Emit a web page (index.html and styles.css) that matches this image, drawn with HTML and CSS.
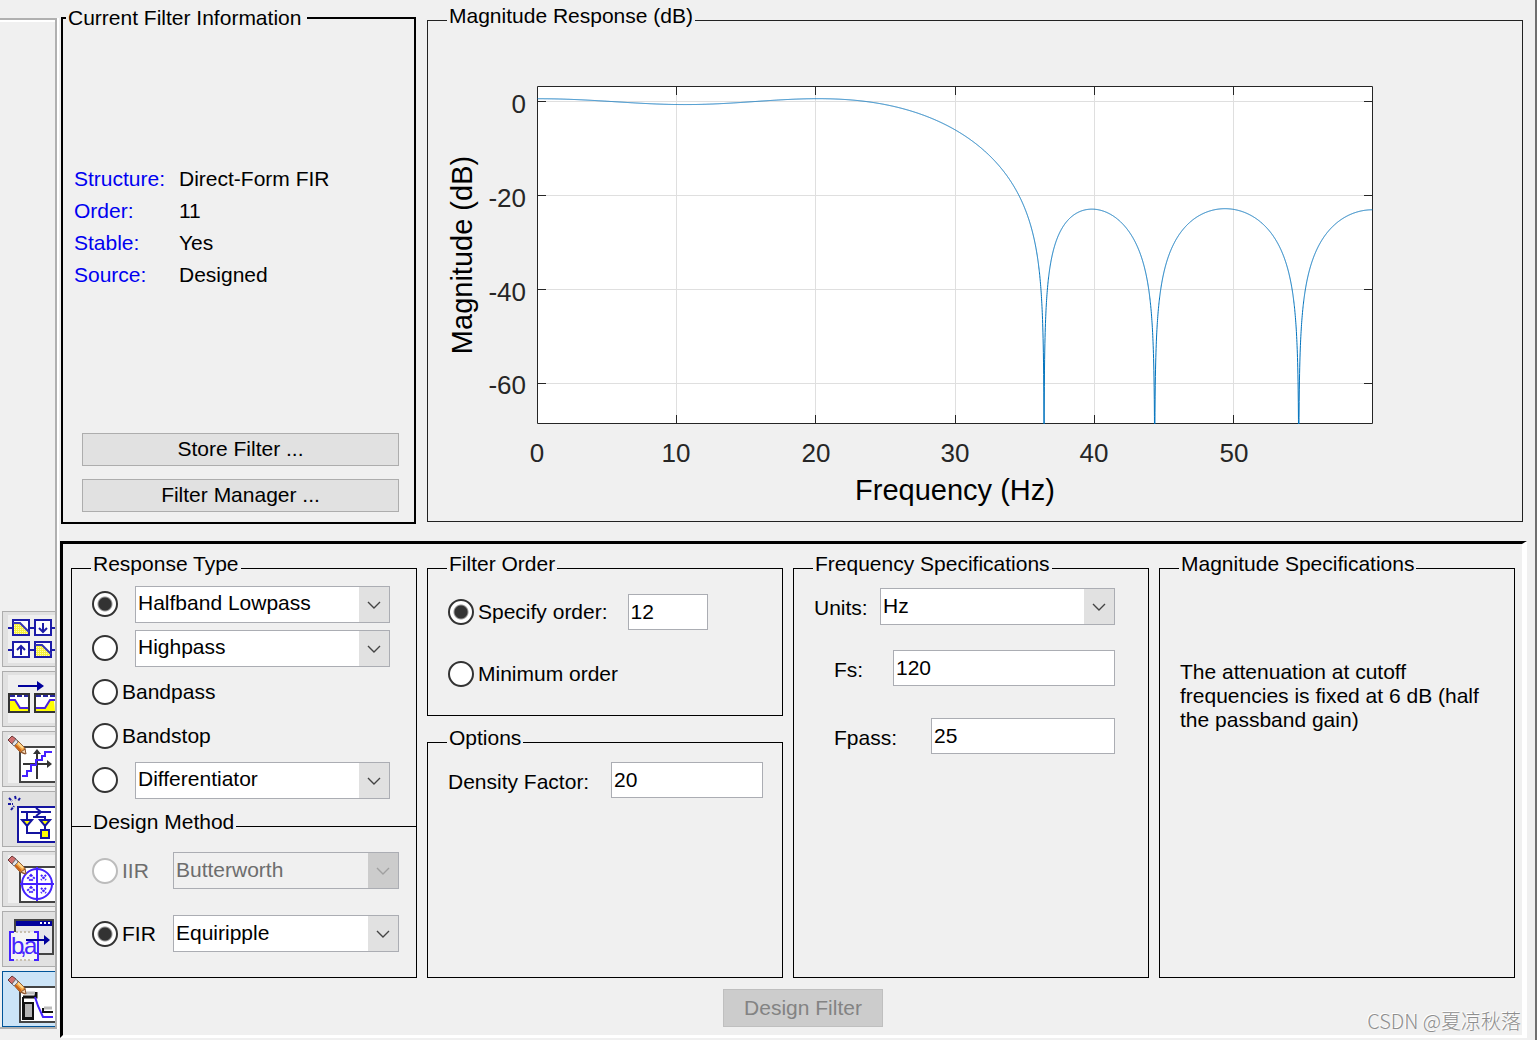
FILE: index.html
```html
<!DOCTYPE html>
<html lang="en">
<head>
<meta charset="utf-8">
<title>Filter Designer</title>
<link rel="stylesheet" href="styles.css">
</head>
<body>
<svg class="defs" aria-hidden="true">
  <defs>
    <pattern id="dots" width="2" height="2" patternUnits="userSpaceOnUse">
      <rect width="2" height="2" fill="#f4f03c"/><rect width="1" height="1" fill="#fffbb0"/>
    </pattern>
    <g id="pencil" stroke-width="1">
      <path d="M4 8 L8 4 L17 13 L17 19 L12 17 Z" fill="#f0a040" stroke="#8a5430"/>
      <path d="M7 10 L13 16" stroke="#c86418" stroke-width="2"/>
      <path d="M10 8 L15 13" stroke="#ffd890" stroke-width="2"/>
      <path d="M0 5 L4 1 L8 4 L4 9 Z" fill="#d07070" stroke="#6a3838"/>
      <path d="M4 9 L8 4 L10 7 L6 11 Z" fill="#e4e4e8" stroke="#77777c"/>
      <path d="M13 17 L18 19 L17 14 Z" fill="#f8d8b0" stroke="#8a5430"/>
    </g>
    <g id="sheet">
      <rect x="12" y="12" width="40" height="35" fill="#fff" stroke="#444" stroke-width="2"/>
    </g>
  </defs>
</svg>

<nav class="toolbar" aria-label="Design panels">
  <button type="button" class="tool" aria-label="Create a multirate filter">
    <svg viewBox="0 0 47 48" fill="none" stroke="#1c1ca8" stroke-width="2">
      <rect width="47" height="48" fill="#efefef" stroke="none"/>
      <path d="M0 13 H47 M0 35 H47"/>
      <path d="M5 5 H21 V20 H5 Z M27 5 H43 V20 H27 Z M5 27 H21 V42 H5 Z M27 27 H43 V42 H27 Z" fill="#fdfdfd"/>
      <path d="M6 7 H12 L20 17 V19 H6 Z M28 29 H34 L42 39 V41 H28 Z" fill="url(#dots)" stroke="none"/>
      <path d="M5 8 H12 L21 17 M27 30 H34 L43 39" stroke="#3434b8"/>
      <path d="M35 8 V17 M31 13 L35 17 L39 13 M13 40 V31 M9 35 L13 31 L17 35"/>
    </svg>
  </button>
  <button type="button" class="tool" aria-label="Transform filter">
    <svg viewBox="0 0 47 48" fill="none" stroke-width="2">
      <rect width="47" height="48" fill="#efefef"/>
      <path d="M10 11 H31" stroke="#00009c"/><path d="M29 6 L36 11 L29 16 Z" fill="#00009c"/>
      <path d="M1 19 H21 V37 H1 Z M27 19 H50 V37 H27 Z" fill="#fff" stroke="#333"/>
      <path d="M2 25 H7 L12 34 H20 V36 H2 Z M46 25 H42 L37 34 H28 V36 H47 Z" fill="#ffff00"/>
      <path d="M2 25 H7 L12 33 H20 M47 25 H42 L37 33 H28" stroke="#4a22e0"/>
      <path d="M2 21 H20 M28 21 H47" stroke="#2626a0" stroke-dasharray="5 2"/>
    </svg>
  </button>
  <button type="button" class="tool" aria-label="Set quantization parameters">
    <svg viewBox="0 0 47 48" fill="none" stroke-width="2">
      <rect width="47" height="48" fill="#efefef"/>
      <use href="#sheet"/>
      <path d="M29 44 V18 M15 29 H41" stroke="#333"/>
      <path d="M25 19 L29 14 L33 19 Z M39 25 L44 29 L39 33 Z" fill="#333"/>
      <path d="M14 41 H19 V36 H23 V30 H28 V25 H34 V21 H37 V17 H44" stroke="#4422ff"/>
      <use href="#pencil"/>
    </svg>
  </button>
  <button type="button" class="tool" aria-label="Realize model">
    <svg viewBox="0 0 47 48" fill="none" stroke="#1414a0" stroke-width="2">
      <path d="M1 3 L4 6 M7 1 L8 5 M12 3 L10 6 M0 9 H5 M3 15 L6 11" stroke-dasharray="3 1"/>
      <rect x="10" y="12" width="42" height="35" fill="#fff"/>
      <path d="M13 17 H43 M19 17 V38 H33 M25 22 H37 V38 M28 13 L33 17 L28 21"/>
      <path d="M14 25 H24 L19 31 Z M32 25 H42 L37 31 Z" fill="#ffff00"/>
      <path d="M33 35 H41 V43 H33 Z" fill="#ffff00"/>
    </svg>
  </button>
  <button type="button" class="tool" aria-label="Pole/zero editor">
    <svg viewBox="0 0 47 48" fill="none" stroke-width="2">
      <rect width="47" height="48" fill="#efefef"/>
      <use href="#sheet"/>
      <g stroke="#4422ff"><circle cx="29" cy="29" r="15"/>
      <path d="M29 12 V46 M12 29 H46"/>
      <path d="M33 20 L38 25 M38 20 L33 25 M33 33 L38 38 M38 33 L33 38 M23 20 L26 23 L23 26 L20 23 Z M23 32 L26 35 L23 38 L20 35 Z" stroke-dasharray="2 1"/></g>
      <use href="#pencil"/>
    </svg>
  </button>
  <button type="button" class="tool" aria-label="Import filter">
    <svg viewBox="0 0 47 48" fill="none" stroke-width="2">
      <rect x="7" y="5" width="38" height="34" fill="#e6e6ea" stroke="#444"/>
      <rect x="8" y="6" width="36" height="5" fill="#00009c"/>
      <path d="M32 8 H43" stroke="#fff" stroke-dasharray="2 2"/>
      <path d="M2 17 H30 V45 H2 Z" fill="#f4f4f4"/>
      <path d="M6 17 H2 V45 H6 M26 17 H30 V45 H26" stroke="#4422ff"/>
      <path d="M8 17 H24 M8 45 H24" stroke="#c8c0b0" stroke-dasharray="2 2"/>
      <text class="coef" x="3 12 16" y="39">b,a</text>
      <path d="M18 25 H37" stroke="#00009c"/><path d="M36 20 L42 25 L36 30 Z" fill="#00009c"/>
    </svg>
  </button>
  <button type="button" class="tool tool-active" aria-label="Design filter" aria-pressed="true">
    <svg viewBox="0 0 47 48" fill="none" stroke-width="2">
      <use href="#sheet"/>
      <path d="M16 28 H25 V43 H16 Z" fill="#b4b4b4" stroke="#111"/>
      <path d="M15 22 H28 V17" stroke="#111" stroke-width="3"/>
      <path d="M18 18 H27 M36 33 H44" stroke="#bbb" stroke-width="3"/>
      <path d="M15 22 V44 M35 33 V37 H45" stroke="#111"/>
      <path d="M14 44 H26" stroke="#111"/>
      <path d="M27 22 L30 31 L35 42 H45" stroke="#4422ff"/>
      <use href="#pencil"/>
    </svg>
  </button>
</nav>

<main class="main">
  <div class="top">
    <fieldset class="info">
      <legend>Current Filter Information</legend>
      <dl class="facts">
        <dt>Structure:</dt><dd>Direct-Form FIR</dd>
        <dt>Order:</dt><dd>11</dd>
        <dt>Stable:</dt><dd>Yes</dd>
        <dt>Source:</dt><dd>Designed</dd>
      </dl>
      <div class="info-actions">
        <button type="button" class="btn">Store Filter ...</button>
        <button type="button" class="btn">Filter Manager ...</button>
      </div>
    </fieldset>

    <fieldset class="group response">
      <legend>Magnitude Response (dB)</legend>
      <svg class="plot" viewBox="0 0 1094 489" role="img" aria-label="Magnitude response in dB against frequency in Hz">
        <defs><clipPath id="area"><rect width="836" height="338"/></clipPath></defs>
        <g transform="translate(109 54)">
          <rect width="836" height="338" fill="#fff"/>
          <path class="grid" d="M139.5 0 V337 M278.5 0 V337 M418.5 0 V337 M557.5 0 V337 M696.5 0 V337 M0 15.5 H835 M0 109.5 H835 M0 203.5 H835 M0 297.5 H835"/>
          <path class="axis" d="M0.5 0.5 H835.5 V337.5 H0.5 Z M139.5 0 V9 M278.5 0 V9 M418.5 0 V9 M557.5 0 V9 M696.5 0 V9 M139.5 337 V329 M278.5 337 V329 M418.5 337 V329 M557.5 337 V329 M696.5 337 V329 M0 15.5 H9 M0 109.5 H9 M0 203.5 H9 M0 297.5 H9 M835 15.5 H827 M835 109.5 H827 M835 203.5 H827 M835 297.5 H827"/>
          <path class="curve" id="curve" clip-path="url(#area)"/>
          <g class="tick x">
            <text x="0" y="376">0</text><text x="139" y="376">10</text><text x="279" y="376">20</text>
            <text x="418" y="376">30</text><text x="557" y="376">40</text><text x="697" y="376">50</text>
          </g>
          <g class="tick y">
            <text x="-11" y="27">0</text><text x="-11" y="121">-20</text><text x="-11" y="215">-40</text><text x="-11" y="308">-60</text>
          </g>
          <text class="axis-name" x="418" y="414">Frequency (Hz)</text>
          <text class="axis-name" transform="translate(-65 169) rotate(-90)">Magnitude (dB)</text>
        </g>
      </svg>
    </fieldset>
  </div>

  <form class="design">
    <div class="columns">
      <div class="column">
        <fieldset class="group type">
          <legend>Response Type</legend>
          <div class="row"><input type="radio" name="type" checked aria-label="Lowpass type"><select class="kind" aria-label="Lowpass type list"><option>Halfband Lowpass</option></select></div>
          <div class="row"><input type="radio" name="type" aria-label="Highpass type"><select class="kind" aria-label="Highpass type list"><option>Highpass</option></select></div>
          <div class="row"><input type="radio" name="type" id="bp"><label for="bp">Bandpass</label></div>
          <div class="row"><input type="radio" name="type" id="bs"><label for="bs">Bandstop</label></div>
          <div class="row"><input type="radio" name="type" aria-label="Other type"><select class="kind" aria-label="Other type list"><option>Differentiator</option></select></div>
        </fieldset>
        <fieldset class="group method">
          <legend>Design Method</legend>
          <div class="row"><input type="radio" name="method" id="iir" disabled><label for="iir" class="short off">IIR</label><select aria-label="IIR method" disabled><option>Butterworth</option></select></div>
          <div class="row"><input type="radio" name="method" id="fir" checked><label for="fir" class="short">FIR</label><select aria-label="FIR method"><option>Equiripple</option></select></div>
        </fieldset>
      </div>

      <div class="column stacked">
        <fieldset class="group order">
          <legend>Filter Order</legend>
          <div class="row"><input type="radio" name="order" id="spec" checked><label for="spec">Specify order:</label><input type="text" class="field order-field" value="12" aria-label="Order"></div>
          <div class="row"><input type="radio" name="order" id="min"><label for="min">Minimum order</label></div>
        </fieldset>
        <fieldset class="group options">
          <legend>Options</legend>
          <div class="row"><label for="density">Density Factor:</label><input type="text" class="field density-field" id="density" value="20"></div>
        </fieldset>
      </div>

      <fieldset class="group freq">
        <legend>Frequency Specifications</legend>
        <div class="row"><label for="units">Units:</label><select id="units" class="units"><option>Hz</option></select></div>
        <div class="row nested"><label for="fs">Fs:</label><input type="text" class="field fs" id="fs" value="120"></div>
        <div class="row nested last"><label for="fpass">Fpass:</label><input type="text" class="field fpass" id="fpass" value="25"></div>
      </fieldset>

      <fieldset class="group mag">
        <legend>Magnitude Specifications</legend>
        <p class="note">The attenuation at cutoff frequencies is fixed at 6 dB (half the passband gain)</p>
      </fieldset>
    </div>
    <div class="actions"><button type="button" class="btn design-btn" disabled>Design Filter</button></div>
  </form>
  <div class="watermark">CSDN @夏凉秋落</div>
</main>
<script src="plot.js"></script>
</body>
</html>
```
FILE: styles.css
```css
* { box-sizing: border-box; }

body {
  margin: 0;
  min-height: 100vh;
  display: grid;
  grid-template-columns: 60px 1fr;
  background: #f0f0f0;
  border-right: 2px solid #707070;
  color: #000;
  font: 21px/24px "Liberation Sans", Arial, "Noto Sans CJK SC", sans-serif;
}

button, input, select { font: inherit; color: inherit; margin: 0; }
.defs { position: absolute; width: 0; height: 0; }

/* Side toolbar */
.toolbar {
  display: flex;
  flex-direction: column;
  justify-content: flex-end;
  gap: 4px;
  width: 57px;
  margin: 18px 0 11px;
  padding-left: 2px;
  border: 2px solid #b0b0b0;
  border-left: 0;
  box-shadow: inset 0 2px #fff, 2px 0 #fff;
}
.tool {
  height: 56px;
  padding: 0 0 0 5px;
  background: #e1e1e1;
  border: 1px solid #adadad;
  border-right: 0;
  overflow: hidden;
  display: flex;
  align-items: center;
}
.tool svg { width: 47px; height: 48px; flex: none; }
.tool-active { background: #cce4f7; border-color: #005499; }
.coef { font: 24px "Liberation Sans", Arial, sans-serif; fill: #4422ff; stroke: none; }

/* Layout */
.main { position: relative; display: flex; flex-direction: column; padding: 6px 8px 2px 0; min-width: 0; }
.top { display: grid; grid-template-columns: 355px 1fr; gap: 11px; padding: 0 4px 0 1px; }

fieldset { margin: 0; padding: 0; border: 1px solid #000; min-width: 0; }
legend { padding: 0 2px; }
.group > legend { margin-left: -1px; line-height: 16px; padding-bottom: 8px; }

/* Current filter information */
.info {
  border: 2px solid #000;
  display: flex;
  flex-direction: column;
  justify-content: space-between;
  padding: 133px 15px 10px 11px;
}
.info legend { margin-left: -8px; padding: 0 6px 0 2px; }
.facts { display: grid; grid-template-columns: 105px 1fr; line-height: 32px; margin: 0; }
.facts dt { color: #0000f0; }
.facts dd { margin: 0; }
.info-actions { display: grid; gap: 13px; padding-left: 8px; }

.btn { height: 33px; padding: 0 0 2px; background: #e1e1e1; border: 1px solid #adadad; }

/* Plot */
.response { margin: 2px 0; border-color: #222; }
.response > legend { margin-left: 19px; }
.plot { display: block; width: 100%; height: auto; font-family: "Liberation Sans", Arial, sans-serif; }
.grid { stroke: #dfdfdf; fill: none; }
.axis { stroke: #262626; fill: none; }
.curve { stroke: #0072bd; fill: none; }
.tick { font-size: 26px; fill: #262626; }
.x { text-anchor: middle; }
.y { text-anchor: end; }
.axis-name { font-size: 29px; text-anchor: middle; }

/* Design panel */
.design {
  margin-top: 17px;
  padding: 12px 7px 8px 8px;
  border: 3px solid #000;
  border-right: 5px solid #fff;
  border-bottom-color: #fff;
}
.columns { display: grid; grid-template-columns: 346fr 356fr 356fr 356fr; gap: 10px; }
.column { display: flex; flex-direction: column; }
.stacked { gap: 14px; }
.row { display: flex; align-items: center; }

.type { padding: 2px 20px 24px; border-bottom: 0; }
.type .row { height: 44px; }
.kind { width: 255px; margin-left: 17px; }
.method { margin-top: -12px; padding: 14px 17px 25px 20px; display: grid; gap: 26px; }
.method select { flex: 1; min-width: 0; }
.short { width: 55px; }
.off { color: #6d6d6d; }

.order { padding: 14px 20px 23px; display: grid; gap: 26px; }
.order .row { height: 36px; }
.order-field { width: 80px; margin-left: 20px; }
.options { flex: 1; padding: 8px 19px 8px 20px; }
.density-field { width: 152px; margin-left: auto; }

.freq { padding: 8px 33px 8px 20px; }
.freq .row { justify-content: space-between; }
.freq label, .options label { padding-top: 3px; }
.nested { padding-left: 20px; margin-top: 25px; }
.last { margin-top: 32px; }
.units { width: 235px; }
.fs { width: 222px; }
.fpass { width: 184px; }

.mag { padding: 80px 20px 8px; }
.note { margin: 0; }

.actions { display: flex; justify-content: center; padding: 11px 0 0 20px; }
.design-btn { width: 160px; height: 38px; padding: 0; }
.design-btn:disabled { background: #ccc; border-color: #bfbfbf; color: #838383; }

/* Controls */
input[type="radio"] {
  appearance: none;
  flex: none;
  width: 26px;
  height: 26px;
  border: 2px solid #333;
  border-radius: 50%;
  background: #fff;
}
input[type="radio"]:checked { background: radial-gradient(circle, #333 6px, #fff 8px); }
input[type="radio"]:disabled { border-color: #bcbcbc; }
input[type="radio"] + label { padding-left: 4px; }

select {
  appearance: none;
  height: 37px;
  padding: 0 34px 2px 2px;
  border: 1px solid #abadb3;
  border-radius: 0;
  background:
    url("data:image/svg+xml,%3Csvg xmlns='http://www.w3.org/2000/svg' width='30' height='35'%3E%3Cpath d='M0 0H30V35H0z' fill='%23e1e1e1'/%3E%3Cpath d='M9 15l6 6 6-6' fill='none' stroke='%23444' stroke-width='1.4'/%3E%3C/svg%3E") right center no-repeat,
    #fff;
}
select:disabled {
  color: #6d6d6d;
  opacity: 1;
  background:
    url("data:image/svg+xml,%3Csvg xmlns='http://www.w3.org/2000/svg' width='30' height='35'%3E%3Cpath d='M0 0H30V35H0z' fill='%23cccccc'/%3E%3Cpath d='M9 15l6 6 6-6' fill='none' stroke='%23a0a0a0' stroke-width='1.4'/%3E%3C/svg%3E") right center no-repeat,
    #f0f0f0;
}
.field { height: 36px; padding: 0 2px 1px; border: 1px solid #abadb3; background: #fff; border-radius: 0; }

.watermark {
  position: absolute;
  right: 14px;
  bottom: 7px;
  color: #8e8e8e;
  font-family: "Noto Sans CJK SC", sans-serif;
  font-size: 20px;
  font-weight: 300;
  text-shadow: -1px -1px #fff;
  pointer-events: none;
}
```
FILE: plot.js
```js
// Zero-phase response of the halfband equiripple filter, drawn in dB.
const FS = 120;
const taps = { 1: 0.6282, 3: -0.1908, 5: 0.1331 };
const points = [];
for (let i = 0; i <= 6000; i++) {
  const f = i / 100;
  const w = (2 * Math.PI * f) / FS;
  let a = 0.5;
  for (const k in taps) a += taps[k] * Math.cos(k * w);
  const db = 20 * Math.log10(Math.max(Math.abs(a), 1e-5));
  points.push((0.5 + (f * 835) / 60).toFixed(2) + " " + (15.5 - db * 4.7).toFixed(2));
}
document.getElementById("curve").setAttribute("d", "M" + points.join("L"));
```
